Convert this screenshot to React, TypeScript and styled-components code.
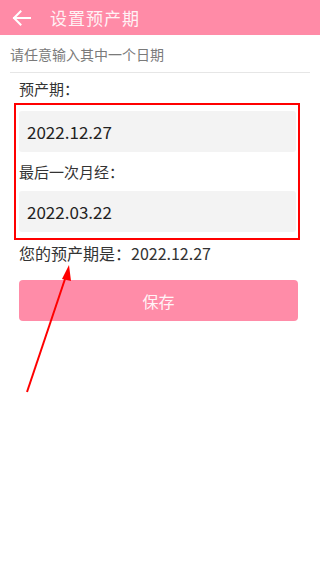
import React from "react";
import styled, { createGlobalStyle } from "styled-components";

const GlobalStyle = createGlobalStyle`
  html, body {
    margin: 0;
    padding: 0;
    background: #ffffff;
  }
  body {
    font-family: "Noto Sans CJK SC", "Noto Sans", Roboto, sans-serif;
  }
`;

const Page = styled.div`
  position: relative;
  width: 320px;
  height: 567px;
  overflow: hidden;
  background: #ffffff;
`;

const Header = styled.div`
  height: 35px;
  background: #ff8ba7;
  display: flex;
  align-items: center;
  padding-left: 12px;
  box-sizing: border-box;
`;

const Title = styled.div`
  margin-left: 19px;
  font-size: 17px;
  color: #fff2f5;
  letter-spacing: 1px;
`;

const Hint = styled.div`
  margin: 0 10px;
  height: 37px;
  display: flex;
  align-items: center;
  font-size: 14px;
  color: #7a7a7a;
  border-bottom: 1px solid #e6e6e6;
`;

const Label = styled.div<{ $h: number; $size?: number }>`
  height: ${({ $h }) => $h}px;
  display: flex;
  align-items: center;
  padding-left: 19px;
  font-size: ${({ $size }) => $size ?? 15}px;
  color: #333333;
`;

const Highlight = styled.div`
  margin-left: 14px;
  width: 286px;
  box-sizing: border-box;
  border: 2px solid #ff0000;
  padding: 6px 2px 6px 3px;
`;

const InnerLabel = styled(Label)`
  padding-left: 0;
`;

const DateField = styled.div`
  height: 41px;
  background: #f3f3f3;
  border-radius: 3px;
  display: flex;
  align-items: center;
  padding-left: 8px;
  font-size: 17px;
  color: #222222;
`;

const SaveButton = styled.button`
  margin: 14px 0 0 19px;
  width: 279px;
  height: 41px;
  border: none;
  border-radius: 4px;
  background: #ff8ca8;
  color: #fff4f7;
  font-family: inherit;
  font-size: 16px;
`;

const Annotation = styled.svg`
  position: absolute;
  left: 0;
  top: 0;
  pointer-events: none;
`;

const BackArrow = () => (
  <svg width="19" height="16" viewBox="0 0 19 16">
    <path
      d="M18 8H2M8.5 1.5L2 8l6.5 6.5"
      fill="none"
      stroke="#ffffff"
      strokeWidth="2"
      strokeLinecap="square"
    />
  </svg>
);

export default function App() {
  return (
    <Page>
      <GlobalStyle />
      <Header>
        <BackArrow />
        <Title>设置预产期</Title>
      </Header>
      <Hint>请任意输入其中一个日期</Hint>
      <Label $h={30}>预产期：</Label>
      <Highlight>
        <DateField>2022.12.27</DateField>
        <InnerLabel $h={39}>最后一次月经：</InnerLabel>
        <DateField>2022.03.22</DateField>
      </Highlight>
      <Label $h={26} $size={16}>您的预产期是：2022.12.27</Label>
      <SaveButton>保存</SaveButton>
      <Annotation width="320" height="567" viewBox="0 0 320 567">
        <line x1="27" y1="392" x2="66" y2="276" stroke="#ff0000" strokeWidth="2" />
        <polygon points="69,265 62,279 71,281" fill="#ff0000" />
      </Annotation>
    </Page>
  );
}
